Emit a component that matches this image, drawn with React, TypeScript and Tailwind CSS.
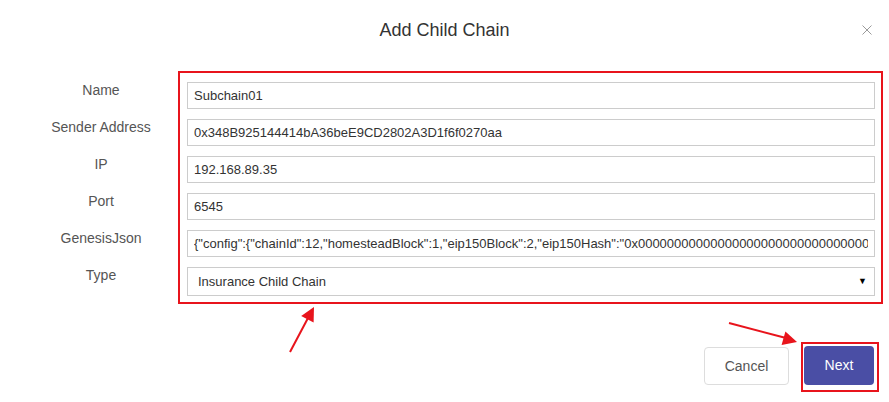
import React from "react"

const fields = [
  { label: "Name", value: "Subchain01" },
  { label: "Sender Address", value: "0x348B925144414bA36beE9CD2802A3D1f6f0270aa" },
  { label: "IP", value: "192.168.89.35" },
  { label: "Port", value: "6545" },
  {
    label: "GenesisJson",
    value:
      '{"config":{"chainId":12,"homesteadBlock":1,"eip150Block":2,"eip150Hash":"0x0000000000000000000000000000000000000000000000000000000000000000"}}',
  },
]

export default function App() {
  return (
    <div className="relative w-[889px] h-[402px] bg-white font-['Liberation_Sans',Arial,sans-serif] overflow-hidden">
      {/* header */}
      <div className="flex items-center justify-between px-[17px] pt-[19px]">
        <div className="w-[10px]" />
        <h1 className="text-[18px] leading-[22px] text-[#333]">Add Child Chain</h1>
        <button className="w-[10px] h-[10px] flex items-center justify-center">
          <svg width="10" height="10" viewBox="0 0 10 10">
            <path d="M0.5 0.5L9.5 9.5M9.5 0.5L0.5 9.5" stroke="#9a9a9a" strokeWidth="1" />
          </svg>
        </button>
      </div>

      {/* form */}
      <div className="flex mt-[30px]">
        <div className="w-[178px] pl-[24px] pt-[11px] flex flex-col text-center">
          {[...fields.map((f) => f.label), "Type"].map((l) => (
            <div key={l} className="h-[37px] text-[14px] leading-[16px] text-[#555]">
              {l}
            </div>
          ))}
        </div>
        <div className="w-[705px] border-2 border-[#e8141c] pt-[9px] pl-[7px] pr-[6px] pb-[6px] flex flex-col gap-[10px]">
          {fields.map((f) => (
            <input
              key={f.label}
              readOnly
              value={f.value}
              className="h-[27px] w-full border border-[#ccc] px-[6px] text-[13px] text-[#333] outline-none bg-white"
            />
          ))}
          <div className="h-[29px] border border-[#ccc] flex items-center justify-between pl-[10px] pr-[7px] text-[13px] text-[#333]">
            <span>Insurance Child Chain</span>
            <span className="text-[9px] text-black">▼</span>
          </div>
        </div>
      </div>

      {/* footer */}
      <div className="flex justify-end items-start gap-[12px] pr-[10px] mt-[38px]">
        <button className="mt-[5px] w-[85px] h-[38px] border border-[#ddd] rounded-[4px] bg-white text-[14px] text-[#555]">
          Cancel
        </button>
        <div className="border-2 border-[#e8141c] pl-[1px] pr-[3px] pt-[2px] pb-[5px]">
          <button className="w-[70px] h-[39px] rounded-[4px] bg-[#4a4ea5] text-[14px] text-white">
            Next
          </button>
        </div>
      </div>

      {/* annotation arrows */}
      <svg className="absolute inset-0 pointer-events-none" width="889" height="402">
        <line x1="290" y1="352" x2="308" y2="318" stroke="#e8141c" strokeWidth="2" />
        <polygon points="314,307 313.6,322.6 301.2,316" fill="#e8141c" />
        <line x1="729" y1="323" x2="786" y2="338" stroke="#e8141c" strokeWidth="2" />
        <polygon points="797,342 781.6,344.9 785.4,331.5" fill="#e8141c" />
      </svg>
    </div>
  )
}
